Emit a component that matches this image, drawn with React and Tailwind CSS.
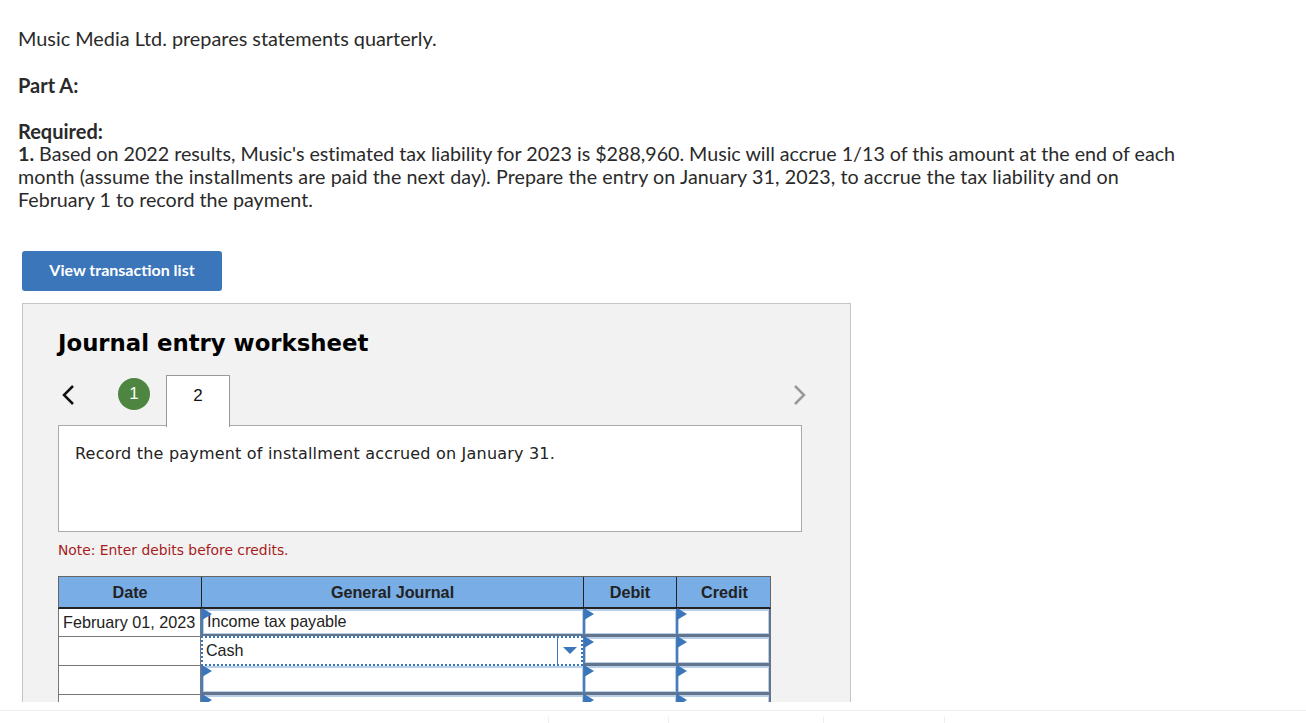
const sans = "font-['Lato','Open_Sans',sans-serif]";
const verdana = "font-['DejaVu_Sans','Liberation_Sans',sans-serif]";

function Flag() {
  return (
    <svg className="absolute left-[-1px] top-[-1px]" width="10" height="12" viewBox="0 0 10 12">
      <path d="M0 0 L10 6 L0 12 Z" fill="#3b76bb" />
    </svg>
  );
}

function InputCell({ children, flag = true }) {
  return (
    <div className="relative h-full border-l-2 border-b-[3px] border-l-[#4a7cb8] border-b-[#63758c]">
      <div className="h-full bg-white border border-t-2 border-[#b9cfe8] text-[16.1px] leading-[21px] pl-[3px] text-[#222] overflow-hidden">
        {children}
      </div>
      {flag && <Flag />}
    </div>
  );
}

function Row({ date, account, h = "h-[29px]", selected }) {
  return (
    <div className={`grid grid-cols-[143px_382px_93px_95px] ${h} font-['Liberation_Sans',sans-serif]`}>
      <div className="border-l border-r border-b border-[#777] bg-white text-[16.2px] leading-[26px] pl-[4px] text-[#222] whitespace-nowrap overflow-hidden">
        {date}
      </div>
      {selected ? (
        <div className="relative -mt-px bg-white border-2 border-dotted border-[#3b76bb] flex items-center text-[16.1px] text-[#222]">
          <span className="flex-1 pl-[3px] pb-px">{account}</span>
          <span className="w-[24px] h-full border-l border-[#3b76bb] flex items-center justify-center">
            <svg width="14" height="8" viewBox="0 0 14 8"><path d="M0 0 H14 L7 7 Z" fill="#3b76bb" /></svg>
          </span>
        </div>
      ) : (
        <InputCell>{account}</InputCell>
      )}
      <InputCell />
      <div className="border-r-2 border-[#63758c]"><InputCell /></div>
    </div>
  );
}

export default function App() {
  return (
    <div className="h-[723px] w-[1306px] overflow-hidden bg-white flex flex-col">
      <main className="h-[702px] overflow-hidden shrink-0">
        <div className={`${sans} pl-[18px] pt-[27px] text-[19.7px] leading-[23px] text-[#2a2a2a] whitespace-nowrap`}>
          <p className="text-[19.85px]">Music Media Ltd. prepares statements quarterly.</p>
          <p className="mt-[24px] font-bold text-[20px]">Part A:</p>
          <p className="mt-[23px] h-[22px] font-bold text-[20px]">Required:</p>
          <p>
            <span className="tracking-[-0.015px]"><b>1.</b> Based on 2022 results, Music's estimated tax liability for 2023 is $288,960. Music will accrue 1/13 of this amount at the end of each</span>
            <br />
            <span className="tracking-[0.09px]">month (assume the installments are paid the next day). Prepare the entry on January 31, 2023, to accrue the tax liability and on</span>
            <br />
            February 1 to record the payment.
          </p>
        </div>
        <div className="pl-[22px] pt-[40px]">
          <button className={`${sans} w-[200px] h-[40px] pb-[2px] rounded-[3px] bg-[#3b76bb] text-white font-bold text-[16px]`}>View transaction list</button>
          <section className="mt-[12px] w-[829px] h-[500px] border border-[#c6c6c6] bg-[#f2f2f2] pl-[35px]">
            <h2 className={`${verdana} mt-[23px] text-[22.8px] leading-[32px] font-bold text-black`}>Journal entry worksheet</h2>
            <div className="mt-[16px] flex h-[51px] relative z-10">
              <svg className="mt-[9px] ml-[3px]" width="16" height="22" viewBox="0 0 16 22"><path d="M12 2 L3 11 L12 20" fill="none" stroke="#111" strokeWidth="2.5" /></svg>
              <div className="mt-[3px] ml-[41px] w-[32px] h-[32px] rounded-full bg-[#4e8540] text-white flex items-center justify-center font-['Liberation_Sans',sans-serif] text-[17px]">1</div>
              <div className="ml-[16px] w-[64px] border border-b-0 border-[#999] bg-white flex justify-center pt-[7px] font-['Liberation_Sans',sans-serif] text-[17px] h-[52px] text-[#111]">2</div>
              <svg className="mt-[9px] ml-[562px]" width="16" height="22" viewBox="0 0 16 22"><path d="M3 2 L12 11 L3 20" fill="none" stroke="#999" strokeWidth="2.5" /></svg>
            </div>
            <div className={`${verdana} -mt-px w-[744px] h-[107px] border border-[#aaa] bg-white pl-[16px] pt-[17px] text-[16px] tracking-[0.2px] leading-[22px] text-[#222]`}>
              Record the payment of installment accrued on January 31.
            </div>
            <p className={`${verdana} mt-[8px] text-[13.85px] leading-[20px] text-[#a61c1c]`}>Note: Enter debits before credits.</p>
            <div className="mt-[16px] w-[713px]">
              <div className="grid grid-cols-[143px_382px_93px_95px] h-[33px] bg-[#78ade6] border border-[#666] border-b-2 border-b-[#222] font-['Liberation_Sans',sans-serif] font-bold text-[16.2px] text-[#222] text-center leading-[30px]">
                <div className="border-r border-[#222]">Date</div>
                <div className="border-r border-[#222]">General Journal</div>
                <div className="border-r border-[#222]">Debit</div>
                <div>Credit</div>
              </div>
              <Row date="February 01, 2023" account="Income tax payable" h="h-[28px]" />
              <Row account="Cash" selected />
              <Row />
              <Row />
            </div>
          </section>
        </div>
      </main>
      <footer className="flex-1 pt-[8px]">
        <div className="h-[13px] border-t border-[#f0f0f0] relative">
          {[548, 668, 823, 944].map((x) => (
            <span key={x} className="absolute top-[6px] h-[8px] w-px bg-[#eee]" style={{ left: x }} />
          ))}
        </div>
      </footer>
    </div>
  );
}
